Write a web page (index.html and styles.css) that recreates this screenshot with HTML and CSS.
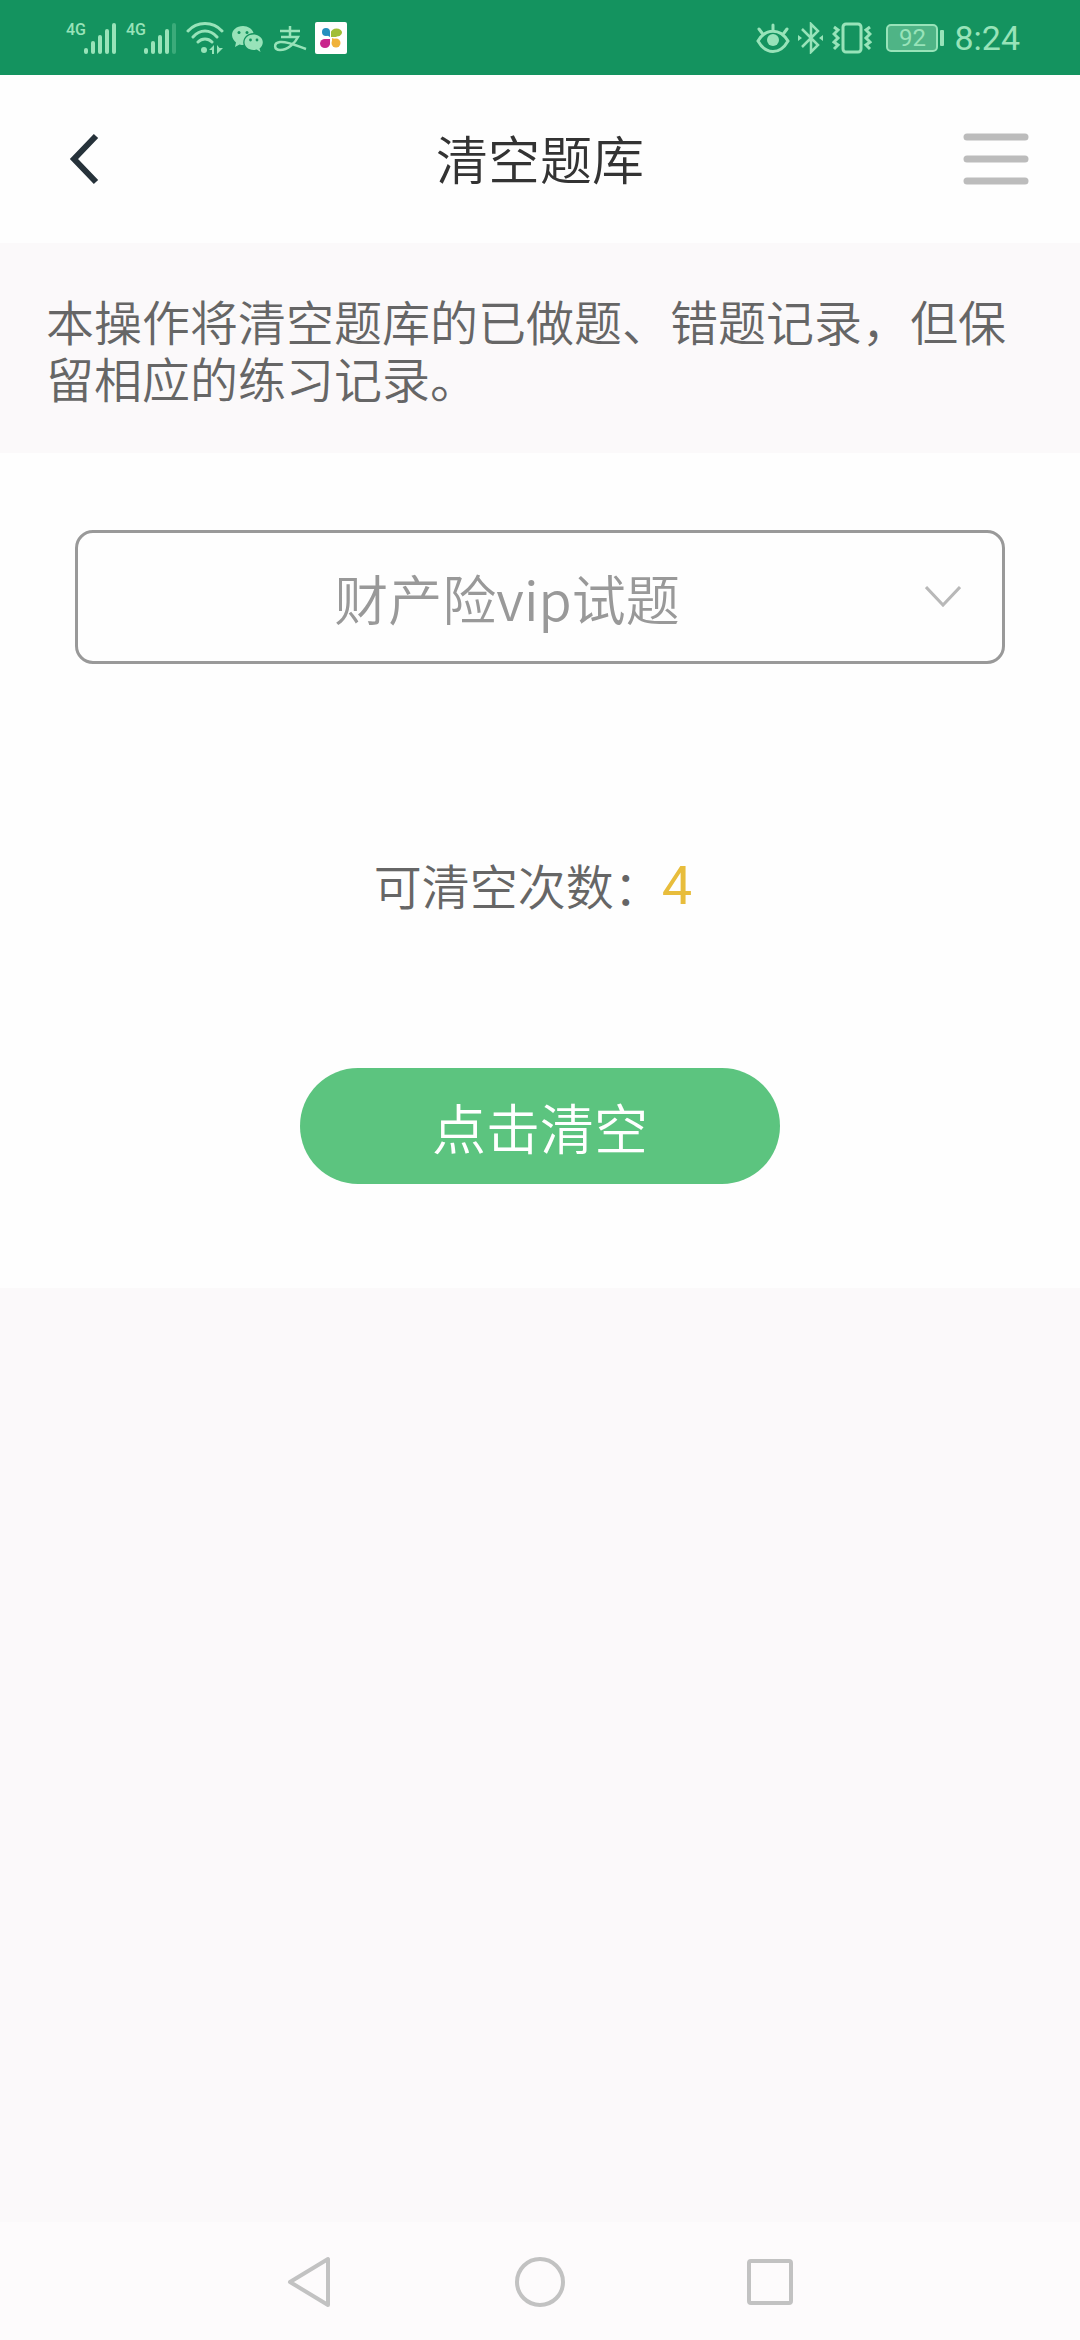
FILE: index.html
```html
<!DOCTYPE html>
<html lang="zh-CN">
<head>
<meta charset="utf-8">
<meta name="viewport" content="width=device-width, initial-scale=1">
<title>清空题库</title>
<link rel="stylesheet" href="styles.css">
</head>
<body>
<div class="status">
  <div class="status-left">
    <div class="signal">
      <span class="signal-type">4G</span>
      <svg width="34" height="32" viewBox="0 0 34 32" fill="currentColor"><rect x="0" y="26" width="4" height="6" rx="2"/><rect x="7" y="19" width="4" height="13" rx="2"/><rect x="14" y="13" width="4" height="19" rx="2"/><rect x="21" y="7" width="4" height="25" rx="2"/><rect x="28" y="1" width="4" height="31" rx="2"/></svg>
    </div>
    <div class="signal">
      <span class="signal-type">4G</span>
      <svg width="34" height="32" viewBox="0 0 34 32" fill="currentColor"><rect x="0" y="26" width="4" height="6" rx="2"/><rect x="7" y="19" width="4" height="13" rx="2"/><rect x="14" y="13" width="4" height="19" rx="2"/><rect x="21" y="7" width="4" height="25" rx="2"/><rect x="28" y="1" width="4" height="31" rx="2" opacity=".3"/></svg>
    </div>
    <svg width="38" height="32" viewBox="0 0 38 32" fill="none" stroke="currentColor" stroke-width="3" stroke-linecap="round"><path d="M2 9C11-1 27-1 36 9M7 15C14 7 24 7 31 15M12 20C16 16 22 16 26 20"/><circle cx="18" cy="28" r="3" fill="currentColor" stroke="none"/><path fill="currentColor" stroke="none" d="M23 28l5-5v9h-2v-4zM31 23v9l6-6h-3.500z"/></svg>
    <svg width="31" height="32" viewBox="0 0 31 32"><path fill="currentColor" d="M11 4C4.500 4 0 8 0 13c0 3 2 6 4 7.500L3 25l4.500-2.500c1.500.4 2.500.5 4 .5C10 16 15 11 21.500 11 20.500 7 16 4 11 4z"/><path fill="currentColor" d="M21.500 12.500c-5 0-9 3.400-9 7.800s4 7.700 9 7.700c1.200 0 2.300-.2 3.300-.5L28.500 30l-1-3.500c2-1.500 3.300-3.700 3.300-6.200 0-4.400-4.300-7.800-9.300-7.800z"/><g fill="#14935f"><circle cx="7" cy="10.500" r="1.500"/><circle cx="15" cy="10.500" r="1.500"/><circle cx="18.500" cy="18" r="1.400"/><circle cx="25" cy="18" r="1.400"/></g></svg>
    <svg width="36" height="32" viewBox="0 0 36 32" fill="none" stroke="currentColor" stroke-width="2.500"><path d="M9 9H29M19 4V15M10 15H27C24 21 17 28 9 28 3 28 2 21 9 20 17 19 26 24 35 27"/></svg>
    <svg width="32" height="32" viewBox="0 0 32 32"><rect width="32" height="32" rx="2" fill="#fff"/><circle cx="11" cy="10" r="4" fill="#258fbf"/><path fill="#258fbf" d="M7 10h8v5z"/><ellipse cx="21.500" cy="10.500" rx="5.500" ry="4" fill="#a1be35"/><path fill="#a1be35" d="M16 9v6h6z"/><ellipse cx="10" cy="21.500" rx="5" ry="4.500" fill="#c8268c"/><path fill="#c8268c" d="M9 17h6v6z"/><circle cx="21" cy="21" r="4.500" fill="#f0b23a"/><path fill="#f0b23a" d="M17 16v6l6-4z"/></svg>
  </div>
  <div class="status-right">
    <svg width="34" height="32" viewBox="0 0 34 32" fill="none" stroke="currentColor" stroke-width="3" stroke-linecap="round"><path d="M2 19C10 6 24 6 32 19 24 33 10 33 2 19zM17 8V3M6 11L3 7M28 11l3-4"/><circle cx="17" cy="18" r="6" fill="currentColor" stroke="none"/></svg>
    <svg width="26" height="32" viewBox="0 0 26 32" fill="none" stroke="currentColor" stroke-width="2.500"><path d="M4 7L20 23 13 30V2L20 9 4 25"/><path fill="currentColor" stroke="none" d="M0 13l4 3-4 3zM25 13l-4 3 4 3z"/></svg>
    <svg width="40" height="32" viewBox="0 0 40 32" fill="none" stroke="currentColor" stroke-width="3"><rect x="11" y="2" width="18" height="28" rx="3"/><path d="M2 5l4 3-4 4 4 4-4 4 4 3-4 4M38 5l-4 3 4 4-4 4 4 4-4 3 4 4"/></svg>
    <div class="battery"><span class="battery-level">92</span></div>
    <time class="clock">8:24</time>
  </div>
</div>

<header class="header">
  <button class="icon-button" type="button" aria-label="返回">
    <svg width="68" height="68" viewBox="0 0 68 68" fill="none" stroke="#26323a" stroke-width="6"><path d="M46 11L24 34 46 57"/></svg>
  </button>
  <h1 class="title">清空题库</h1>
  <button class="icon-button" type="button" aria-label="菜单">
    <svg width="68" height="68" viewBox="0 0 68 68" stroke="#bcbcbc" stroke-width="7" stroke-linecap="round"><path d="M5 12H63M5 34H63M5 56H63"/></svg>
  </button>
</header>

<p class="notice">本操作将清空题库的已做题、错题记录，但保留相应的练习记录。</p>

<main class="panel">
  <div class="picker">
    <select class="picker-select" aria-label="题库">
      <option>财产险vip试题</option>
    </select>
    <svg class="picker-arrow" width="36" height="22" viewBox="0 0 36 22" fill="none" stroke="#b8b8b8" stroke-width="3"><path d="M1 1L18 19 35 1"/></svg>
  </div>
  <p class="remaining">可清空次数：<strong class="count">4</strong></p>
  <button class="clear-button" type="button">点击清空</button>
</main>

<nav class="system-nav">
  <button class="nav-button" type="button" aria-label="后退"><svg width="52" height="52" viewBox="0 0 52 52" fill="none" stroke="#c2c2c2" stroke-width="4" stroke-linejoin="round"><path d="M44 3V49L6 26z"/></svg></button>
  <button class="nav-button" type="button" aria-label="主页"><svg width="52" height="52" viewBox="0 0 52 52" fill="none" stroke="#c2c2c2" stroke-width="4"><circle cx="26" cy="26" r="23"/></svg></button>
  <button class="nav-button" type="button" aria-label="最近任务"><svg width="52" height="52" viewBox="0 0 52 52" fill="none" stroke="#c2c2c2" stroke-width="4"><rect x="5" y="5" width="42" height="42" rx="2"/></svg></button>
</nav>
</body>
</html>
```
FILE: styles.css
```css
* {
  box-sizing: border-box;
}

body {
  display: flex;
  flex-direction: column;
  min-height: 100vh;
  margin: 0;
  background: #fbf9fa;
  color: #666;
  font-family: Roboto, "Noto Sans CJK SC", sans-serif;
  font-size: 48px;
  font-weight: 350;
}

svg {
  display: block;
  flex: none;
}

button {
  padding: 0;
  border: 0;
  background: none;
  font: inherit;
}

/* Status bar */
.status {
  display: flex;
  align-items: center;
  justify-content: space-between;
  height: 75px;
  padding: 0 60px 0 66px;
  background: #14935f;
  color: #98e3b9;
}

.status-left,
.status-right {
  display: flex;
  align-items: center;
  gap: 8px;
}

.signal {
  display: flex;
}

.signal-type {
  width: 18px;
  font-size: 16px;
  font-weight: 500;
  line-height: 16px;
}

.battery {
  display: flex;
  align-items: center;
  margin: 0 2px 0 6px;
}

.battery-level {
  width: 52px;
  padding: 0 10px;
  border: 2px solid currentColor;
  border-radius: 5px;
  background: #4fb486;
  font-size: 24px;
  font-weight: 400;
  line-height: 24px;
  text-align: center;
}

.battery::after {
  width: 4px;
  height: 16px;
  margin-left: 2px;
  border-radius: 1px;
  background: currentColor;
  content: "";
}

.clock {
  font-size: 34px;
  font-weight: 400;
  line-height: 40px;
}

/* Page header */
.header {
  display: flex;
  align-items: center;
  justify-content: space-between;
  padding: 50px;
  background: #fefefe;
}

.title {
  margin: 0;
  padding-top: 8px;
  color: #333;
  font-size: 52px;
  font-weight: inherit;
  line-height: 60px;
}

.notice {
  margin: 0;
  padding: 53px 46px 43px;
  line-height: 57px;
}

/* Clear panel */
.panel {
  display: flex;
  flex-direction: column;
  align-items: center;
  padding: 77px 75px 104px;
  background: #fefefe;
}

.picker {
  display: grid;
  align-items: center;
  width: 100%;
}

.picker-select {
  grid-area: 1 / 1;
  width: 100%;
  height: 134px;
  padding: 0 120px 0 54px;
  border: 3px solid #999;
  border-radius: 18px;
  background: none;
  color: #999;
  font: inherit;
  font-family: "Noto Sans CJK SC", sans-serif;
  font-size: 54px;
  text-align-last: center;
  appearance: none;
}

.picker-arrow {
  grid-area: 1 / 1;
  justify-self: end;
  margin-right: 44px;
  pointer-events: none;
}

.remaining {
  display: flex;
  align-items: center;
  margin: 193px 0 147px;
  padding-right: 14px;
  line-height: 64px;
}

.count {
  padding-bottom: 6px;
  color: #e8bd3c;
  font-size: 54px;
  font-weight: 400;
  line-height: 58px;
}

.clear-button {
  width: 480px;
  max-width: 100%;
  height: 116px;
  border-radius: 58px;
  background: #5cc47f;
  color: #fff;
  font-size: 54px;
}

/* System navigation */
.system-nav {
  display: flex;
  justify-content: center;
  gap: 178px;
  margin-top: auto;
  padding: 34px 0 32px;
  background: #fdfbfc;
}
```
